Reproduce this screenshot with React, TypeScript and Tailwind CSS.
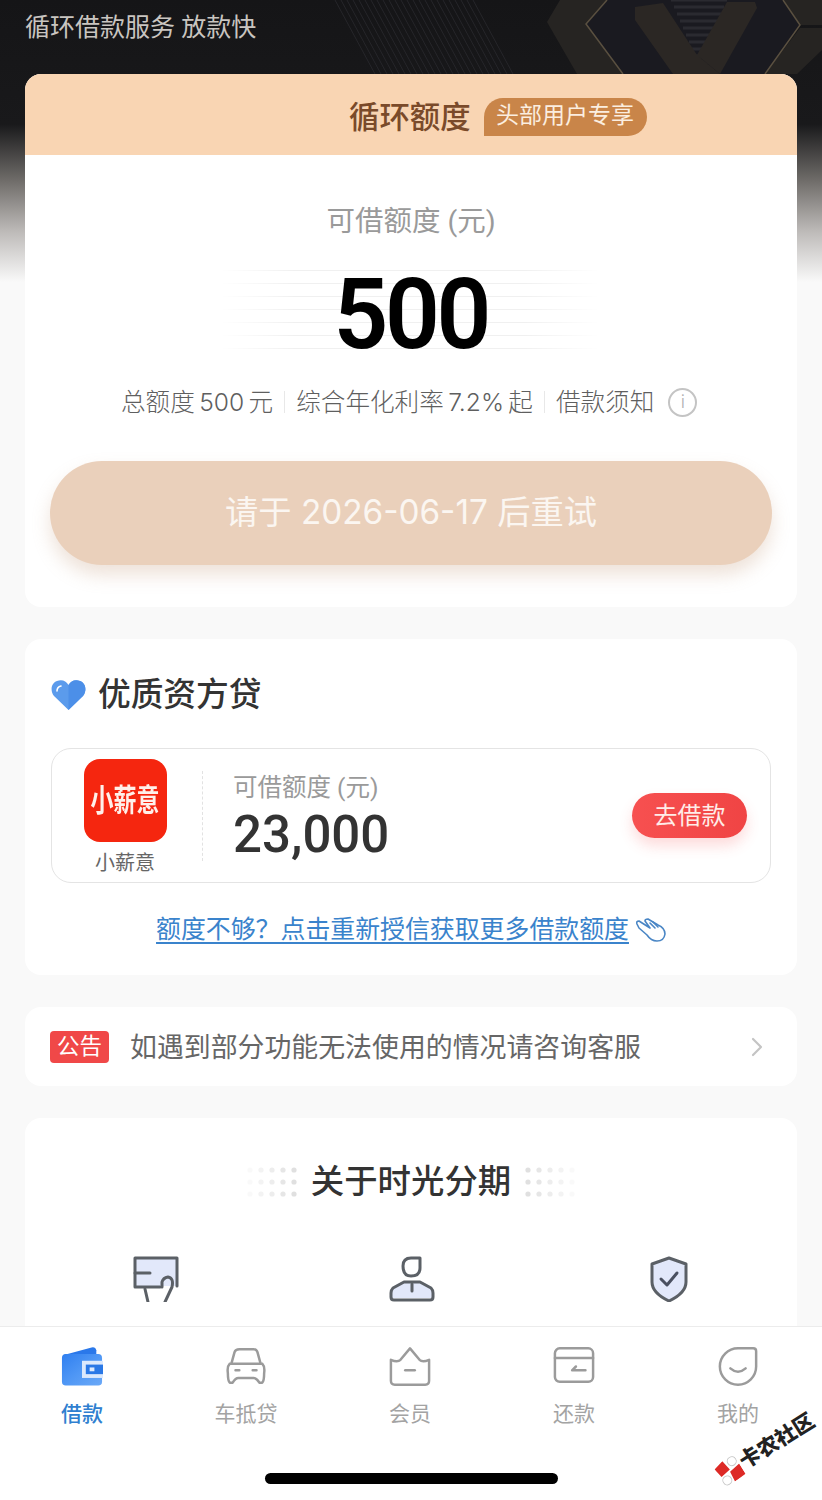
import React from 'react';

const Separator = () => <span className="w-px h-[22px] bg-[#e8e8e8] mx-[11px]" />;

const DotField = ({ flip }: { flip?: boolean }) => (
  <svg width="50" height="30" viewBox="0 0 50 30" className={flip ? 'rotate-180' : ''}>
    {[3, 15, 27].map((y) =>
      [3, 14, 25, 36, 47].map((x, i) => (
        <circle key={`${x}-${y}`} cx={x} cy={y} r="2.6" fill="#d8d8d8" opacity={0.15 + i * 0.16} />
      ))
    )}
  </svg>
);

const HeroArt = () => (
  <svg width="822" height="74" viewBox="0 0 822 74" className="absolute top-0 left-0" fill="none">
    {Array.from({ length: 24 }).map((_, i) => (
      <path key={i} d={`M${335 + i * 6} 0 L${375 + i * 6} 74`} stroke="#26262a" strokeWidth="1" />
    ))}
    <path d="M607 0 L586 24 L623 74 H765 L800 25 L783 0 Z" fill="#1a1a20" />
    <path d="M560 0 H607 L586 24 L623 74 H577 L547 22 Z" fill="#262422" />
    <path d="M783 0 H822 V25 H800 Z M800 28 H822 V50 L797 74 H765 Z" fill="#262422" />
    {Array.from({ length: 9 }).map((_, i) => (
      <path key={i} d={`M${671 + i * 3} ${i * 7} H${727 - i * 3}`} stroke="#2a2a30" strokeWidth="3" />
    ))}
    <path d="M635 7 L663 3 L697 55 L720 74 H673 L635 20 Z" fill="#2b2724" />
    <path d="M727 2 H755 L757 8 L720 74 L697 55 Z" fill="#2b2724" />
    <path d="M607 0 L586 24 L623 74 M783 0 L800 25 L765 74" stroke="#5a5040" strokeWidth="1.5" />
  </svg>
);

const TabWallet = () => (
  <svg width="42" height="41" viewBox="0 0 44 42" fill="none">
    <defs>
      <linearGradient id="wallet" x1="0" y1="0" x2="1" y2="1">
        <stop offset="0" stopColor="#2f7ff0" />
        <stop offset="0.5" stopColor="#4f97f5" />
        <stop offset="1" stopColor="#6ba9f7" />
      </linearGradient>
    </defs>
    <path d="M3 9 L32 1 Q36 0 37 4 V9 Z" fill="#2a78ea" />
    <rect x="1" y="8" width="42" height="33" rx="4" fill="url(#wallet)" />
    <rect x="22" y="15" width="22" height="18" fill="#dce9fc" />
    <rect x="26" y="19" width="18" height="10" fill="#2a78e6" />
    <rect x="30" y="22" width="5" height="4" fill="#dce9fc" />
  </svg>
);

const TabCar = () => (
  <svg width="42" height="41" viewBox="0 0 44 42" fill="none" stroke="#9b9b9b" strokeWidth="2.6" strokeLinecap="round" strokeLinejoin="round">
    <path d="M7 17 L10 6 Q11 3 15 3 H30 Q33 3 34 6 L37 17" />
    <path d="M5 18 H39 Q42 21 41 28 Q41 36 39 38 H36 Q33 33 30 33 H14 Q11 33 8 38 H5 Q3 36 3 28 Q2 21 5 18 Z" />
    <path d="M11 25 H15 M29 25 H33" />
  </svg>
);

const TabCrown = () => (
  <svg width="42" height="41" viewBox="0 0 44 42" fill="none" stroke="#9b9b9b" strokeWidth="2.6" strokeLinecap="round" strokeLinejoin="round">
    <path d="M2 14 Q9 17 12 14 L22 2 L32 14 Q35 17 42 14 V36 Q42 40 38 40 H6 Q2 40 2 36 Z" />
    <path d="M17 25 H27" />
  </svg>
);

const TabRepay = () => (
  <svg width="42" height="41" viewBox="0 0 44 42" fill="none" stroke="#9b9b9b" strokeWidth="2.6" strokeLinecap="round" strokeLinejoin="round">
    <rect x="2" y="2" width="40" height="35" rx="5" />
    <path d="M2 12 H42" />
    <path d="M34 25 H20 L24 21" />
  </svg>
);

const TabMine = () => (
  <svg width="42" height="41" viewBox="0 0 44 42" fill="none" stroke="#9b9b9b" strokeWidth="2.6" strokeLinecap="round" strokeLinejoin="round">
    <path d="M22 2 H38 Q41 2 41 5 V21 A19 19 0 1 1 22 2 Z" />
    <path d="M14 23 Q22 30 30 23" />
  </svg>
);

const tabs = [
  { label: '借款', icon: <TabWallet />, active: true },
  { label: '车抵贷', icon: <TabCar /> },
  { label: '会员', icon: <TabCrown /> },
  { label: '还款', icon: <TabRepay /> },
  { label: '我的', icon: <TabMine /> },
];

export default function App() {
  return (
    <div className="relative w-[822px] h-[1500px] overflow-hidden flex flex-col bg-[#f9f9f9] font-['Roboto','Noto_Sans_CJK_SC',sans-serif]">
      {/* dark header that fades into the page */}
      <div className="absolute top-0 left-0 w-full h-[282px] bg-[linear-gradient(to_bottom,#151517_0%,#19191b_44%,#6f6c69_64%,#bdbab8_82%,#f9f9f9_100%)]">
        <HeroArt />
      </div>

      <main className="relative flex-1 overflow-hidden px-[25px] flex flex-col">
        <p className="h-[74px] pt-[9px] text-[25px] leading-[38px] text-[#c9c5c0]">循环借款服务 放款快</p>

        {/* limit card */}
        <section className="rounded-2xl overflow-hidden bg-white h-[533px] flex flex-col shrink-0">
          <div className="h-[81px] bg-[#f9d5b3] flex items-center pl-[324px] pt-[4px]">
            <h1 className="pt-[3px] text-[30.4px] font-medium text-[#7a4a2a] leading-none">循环额度</h1>
            <span className="ml-[13px] h-[38px] w-[163px] flex items-center justify-center rounded-t-[19px] rounded-br-[19px] bg-[#c98549] text-[23px] text-[#fbeee0]">头部用户专享</span>
          </div>
          <p className="mt-[47px] text-center text-[28.5px] leading-[40px] text-[#9a9a9a]">可借额度 (元)</p>
          <div className="relative mt-[28px] h-[90px] flex items-center justify-center">
            <div className="absolute inset-y-0 left-[195px] w-[380px] bg-[repeating-linear-gradient(to_bottom,#f0f0f0_0px,#f0f0f0_1px,transparent_1px,transparent_13px)] [mask-image:linear-gradient(to_right,transparent,black_20%,black_80%,transparent)]" />
            <span className="relative text-[98px] leading-none font-semibold text-black tracking-[-3.5px] scale-x-[0.98]">500</span>
          </div>
          <div className="mt-[24px] pl-[96px] flex items-center text-[24.6px] leading-[36px] text-[#5f5f5f] font-['Inter','Noto_Sans_CJK_SC',sans-serif] font-light [word-spacing:-2.5px]">
            <span>总额度 500 元</span>
            <Separator />
            <span>综合年化利率 7.2% 起</span>
            <Separator />
            <span>借款须知</span>
            <span className="ml-[14px] w-[29px] h-[29px] rounded-full border-2 border-[#c4c4c4] flex items-center justify-center text-[18px] text-[#b0b0b0]">i</span>
          </div>
          <div className="mt-[41px] mx-[25px] h-[104px] rounded-full bg-[#ead0bb] shadow-[0_10px_18px_rgba(200,160,130,0.3)] flex items-center justify-center text-[33.3px] text-[#fbf6f1] font-['Inter','Noto_Sans_CJK_SC',sans-serif]">
            请于 2026-06-17 后重试
          </div>
        </section>

        {/* partner lender card */}
        <section className="mt-[32px] rounded-2xl bg-white h-[336px] px-[26px] shrink-0">
          <div className="pt-[34px] flex items-center h-[78px]">
            <svg width="35" height="32" viewBox="0 0 35 32">
              <path d="M17.5 31 L3 17 C-1 12 0 4 6 2 C11 0 15 2 17.5 6 C20 2 24 0 29 2 C35 4 36 12 32 17 Z" fill="#5b9bec" />
              <path d="M17.5 6 C20 2 24 0 29 2 C35 4 36 12 32 17 L17.5 31 Z" fill="#4c8fe8" />
              <path d="M6 12 Q6 8 10 7" stroke="#fff" strokeWidth="1.6" fill="none" strokeLinecap="round" />
            </svg>
            <h2 className="ml-[12px] text-[32.7px] font-medium text-[#333] leading-none">优质资方贷</h2>
          </div>
          <div className="mt-[31px] h-[135px] rounded-[20px] border border-[#e4e4e4] flex items-center">
            <div className="w-[146px] mr-[4px] pt-[4px] shrink-0 flex flex-col items-center">
              <div className="w-[83px] h-[83px] rounded-[16px] bg-[#f5260f] flex items-center justify-center text-[23px] font-bold text-[#fff0ea] leading-none"><span className="scale-y-[1.35]">小薪意</span></div>
              <span className="mt-[7px] text-[20px] leading-[28px] text-[#666]">小薪意</span>
            </div>
            <div className="h-[90px] border-l border-dashed border-[#e2e2e2]" />
            <div className="ml-[30px] pt-[4px] flex flex-col">
              <span className="text-[24.5px] leading-[34px] text-[#9a9a9a]">可借额度 (元)</span>
              <span className="text-[51px] leading-[60px] font-medium text-[#333]">23,000</span>
            </div>
            <div className="ml-auto mr-[23px] w-[115px] h-[45px] rounded-full bg-gradient-to-r from-[#f75050] to-[#f04444] shadow-[0_8px_14px_rgba(245,80,80,0.2)] flex items-center justify-center text-[24px] text-[#ffece8]">去借款</div>
          </div>
          <div className="mt-[29px] flex items-center justify-center">
            <span className="text-[24.9px] leading-[36px] text-[#3a83cc] underline underline-offset-4">额度不够？点击重新授信获取更多借款额度</span>
            <svg className="ml-[7px]" width="30" height="24" viewBox="0 0 30 24" fill="none" stroke="#4a86c5" strokeWidth="1.6" strokeLinecap="round" strokeLinejoin="round">
              <path d="M1 6 Q0 3 3 3 L14 10 L9 3 Q9 1 12 1 L22 7 Q29 10 29 16 Q28 23 21 23 Q15 23 11 17 L3 10 Z" />
              <path d="M14 5 L19 10 M17 4 L22 9" />
            </svg>
          </div>
        </section>

        {/* notice */}
        <section className="mt-[32px] rounded-2xl bg-white h-[79px] pl-[25px] pr-[33px] flex items-center shrink-0">
          <span className="w-[59px] h-[32px] rounded-[4px] bg-[#f04848] flex items-center justify-center text-[22.5px] text-white leading-none">公告</span>
          <span className="ml-[21px] pt-[4px] text-[26.9px] text-[#666] leading-none">如遇到部分功能无法使用的情况请咨询客服</span>
          <svg className="ml-auto" width="14" height="20" viewBox="0 0 14 20" fill="none" stroke="#c4c4c4" strokeWidth="2.2" strokeLinecap="round" strokeLinejoin="round">
            <path d="M3 2 L11 10 L3 18" />
          </svg>
        </section>

        {/* about */}
        <section className="mt-[32px] rounded-t-2xl bg-white flex-1 flex flex-col">
          <div className="pt-[41px] flex items-center justify-center gap-[14px]">
            <DotField />
            <h2 className="text-[33.4px] font-medium text-[#333] leading-[46px]">关于时光分期</h2>
            <DotField flip />
          </div>
          <div className="mt-[51px] flex pl-[108px]">
            <svg width="46" height="46" viewBox="0 0 46 46" fill="none" stroke="#5b6066" strokeWidth="3" strokeLinecap="round" strokeLinejoin="round">
              <rect x="3" y="3" width="40" height="27" fill="#e2e8fa" stroke="none" />
              <path d="M44 30 V2 H2 V31 H27" />
              <path d="M2 17 H17" />
              <path d="M12 33 L15 46 M32 46 L39 31 Q41 22 35 21 Q30 22 29 26 V31" />
            </svg>
            <svg className="ml-[210px]" width="46" height="46" viewBox="0 0 46 46" fill="none" stroke="#5b6066" strokeWidth="3" strokeLinecap="round" strokeLinejoin="round">
              <path d="M3 42 V33 Q4 29 14 26 H32 Q42 29 43 33 V42 Z" fill="#e2e8fa" stroke="none" />
              <path d="M14 10 Q14 2 22 2 H31 V12 Q31 20 22 20 Q14 20 14 10 Z" />
              <path d="M15 26 L4 32 Q2 34 2 37 V41 Q2 44 5 44 H41 Q44 44 44 41 V37 Q44 34 42 32 L31 26 Z" />
              <path d="M23 28 V35" />
            </svg>
            <svg className="ml-[214px]" width="40" height="46" viewBox="0 0 40 46" fill="none" stroke="#5b6066" strokeWidth="3" strokeLinecap="round" strokeLinejoin="round">
              <path d="M20 2 L37 8 V26 Q37 37 20 45 Q3 37 3 26 V8 Z" fill="#e2e8fa" />
              <path d="M12 23 L18 29 L28 17" stroke="#4a5060" />
            </svg>
          </div>
        </section>
      </main>

      {/* tab bar */}
      <nav className="relative h-[174px] shrink-0 bg-white border-t border-[#ececec] flex flex-col">
        <div className="pt-[19px] w-[820px] grid grid-cols-5">
          {tabs.map((t) => (
            <div key={t.label} className="flex flex-col items-center">
              {t.icon}
              <span className={`mt-[12px] text-[21px] leading-[30px] ${t.active ? 'text-[#2f7fd0] font-medium' : 'text-[#a3a3a3]'}`}>{t.label}</span>
            </div>
          ))}
        </div>
        <div className="mt-auto mb-[16px] mx-auto w-[293px] h-[11px] rounded-full bg-black" />
        {/* forum watermark */}
        <div className="absolute right-[1px] bottom-[40px] flex items-center -rotate-[32deg]">
          <svg width="24" height="24" viewBox="0 0 24 24">
            <circle cx="5" cy="19" r="4.5" fill="#fff" stroke="#c9c9c9" strokeWidth="1" />
            <circle cx="19" cy="5" r="4.5" fill="#fff" stroke="#c9c9c9" strokeWidth="1" />
            <path d="M0 3 L11 0 L13 11 L2 13 Z M12 13 L24 11 V23 L11 24 Z" fill="#dd2a26" />
          </svg>
          <span className="ml-[2px] text-[21px] font-black text-[#222] leading-none">卡农社区</span>
        </div>
      </nav>
    </div>
  );
}
